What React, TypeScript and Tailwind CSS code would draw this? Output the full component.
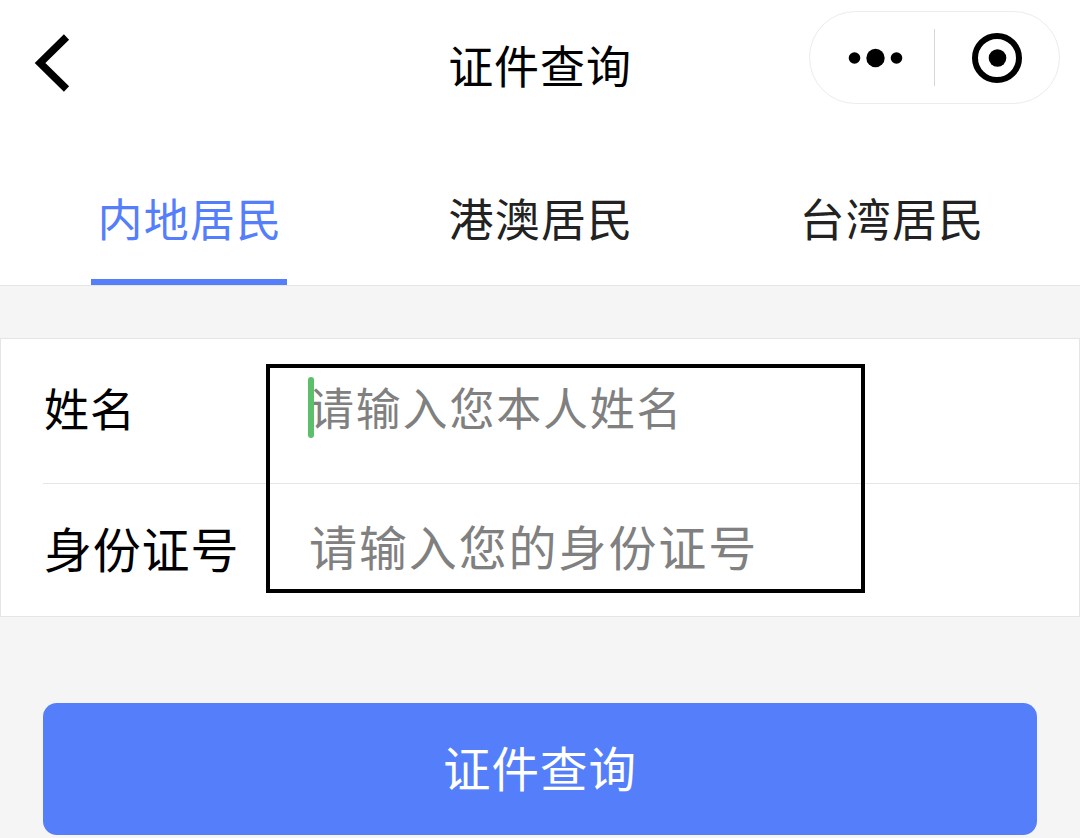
import { useState } from "react";
import clsx from "clsx";

const TABS = ["内地居民", "港澳居民", "台湾居民"];

function NavBar() {
  return (
    <header className="grid h-[134px] grid-cols-3 items-start">
      <button type="button" aria-label="返回" className="mt-[33px] ml-[33px] h-[60px] w-[38px]">
        <svg viewBox="0 0 38 60" className="h-full w-full" fill="none">
          <path
            d="M33.5 4L7 30L33.5 56"
            stroke="#000"
            strokeWidth="7.4"
            strokeLinejoin="miter"
          />
        </svg>
      </button>
      <h1 className="mt-8 text-center text-[45px] leading-[66px] tracking-[0.9px] text-black">
        证件查询
      </h1>
      <div className="mt-[11px] mr-5 flex h-[93px] w-[251px] items-center justify-self-end rounded-full border border-[#ececec]">
        <button type="button" aria-label="更多" className="flex flex-1 justify-center">
          <svg viewBox="0 0 56 20" className="mt-px ml-1.5 h-5 w-14">
            <circle cx="7.5" cy="10" r="5.8" />
            <circle cx="28.5" cy="10" r="9.2" />
            <circle cx="49.5" cy="10" r="5.8" />
          </svg>
        </button>
        <span className="h-[57px] w-px bg-[#d6d6d6]" />
        <button type="button" aria-label="关闭" className="flex flex-1 justify-center">
          <svg viewBox="0 0 50 50" className="h-[50px] w-[50px]" fill="none">
            <circle cx="25" cy="25" r="22" stroke="#000" strokeWidth="6" />
            <circle cx="25.5" cy="25" r="8.8" fill="#000" />
          </svg>
        </button>
      </div>
    </header>
  );
}

export default function App() {
  const [activeTab, setActiveTab] = useState(0);
  const [name, setName] = useState("");
  const [idNumber, setIdNumber] = useState("");

  return (
    <div className="h-[838px] w-[1080px] overflow-hidden bg-[#f5f5f5] font-['Noto_Sans_CJK_SC',sans-serif]">
      <div className="border-b border-[#e5e5e5] bg-white">
        <NavBar />
        <nav className="flex h-[151px] justify-between px-[91px]">
          {TABS.map((tab, index) => (
            <button
              key={tab}
              type="button"
              onClick={() => setActiveTab(index)}
              className={clsx(
                "w-[196px] border-b-6 pt-[51px] pb-7 pl-0.5 text-[45px] leading-[66px] tracking-[1.2px] whitespace-nowrap",
                index === activeTab
                  ? "border-[#547efa] text-[#547efa]"
                  : "border-transparent text-[#222]"
              )}
            >
              {tab}
            </button>
          ))}
        </nav>
      </div>

      <form className="relative mt-[52px] h-[279px] border border-[#e5e5e5] bg-white pl-[42px]">
        <label className="flex h-[145px] items-center border-b border-[#e5e5e5]">
          <span className="w-[265px] pb-[7px] pl-px text-[45px] leading-[66px] tracking-[1px] text-black">
            姓名
          </span>
          <input
            value={name}
            onChange={(e) => setName(e.target.value)}
            placeholder="请输入您本人姓名"
            className="mb-2 h-[66px] w-[540px] pl-px text-[45px] tracking-[1.8px] outline-none placeholder:text-[#808080]"
          />
        </label>
        <label className="flex h-[132px] items-center">
          <span className="w-[265px] pb-[7px] pl-px text-[48px] leading-[70px] tracking-[0.8px] text-black">
            身份证号
          </span>
          <input
            value={idNumber}
            onChange={(e) => setIdNumber(e.target.value)}
            placeholder="请输入您的身份证号"
            className="mb-[11px] h-[70px] w-[540px] pl-px text-[48px] tracking-[1.9px] outline-none placeholder:text-[#808080]"
          />
        </label>
        {/* text caret and the frame drawn over both fields */}
        <span className="absolute top-[38px] left-[307px] h-[61px] w-1.5 rounded-full bg-[#5bbf6c]" />
        <div className="pointer-events-none absolute top-[25px] left-[265px] h-[229px] w-[599px] border-4 border-black" />
      </form>

      <div className="px-[43px] pt-[86px]">
        <button
          type="button"
          className="h-[132px] w-full rounded-[14px] bg-[#547efa] pb-1 text-[47.5px] tracking-[1px] text-white"
        >
          证件查询
        </button>
      </div>
    </div>
  );
}
